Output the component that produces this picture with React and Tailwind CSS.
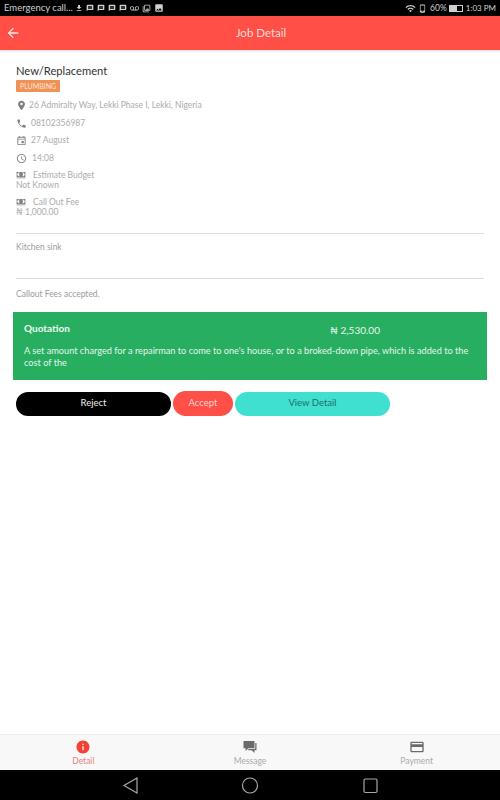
import { IoMdArrowBack, IoMdPin, IoMdCall, IoMdCash, IoMdInformationCircle, IoMdChatboxes } from 'react-icons/io'
import { MdOutlineEvent, MdAccessTime, MdWifi, MdMessage, MdImage, MdFileDownload, MdOutlineCreditCard, MdOutlineVoicemail, MdOutlinePhotoLibrary, MdPhoneAndroid } from 'react-icons/md'

const DetailRow = ({ icon: Icon, children, textLeft, iconSize }) => (
  <div className="flex items-center h-[17.5px] text-[8.5px] text-[#ababab]">
    <span className={`${textLeft} shrink-0`}>
      <Icon className={`${iconSize} text-[#808080]`} />
    </span>
    <span>{children}</span>
  </div>
)

const StatusBar = () => (
  <div className="flex items-center justify-between h-4 bg-black pl-1 pr-1 text-[#cfcfcf] shrink-0">
    <div className="flex items-center">
      <span className="text-[9.5px] w-[71px]">Emergency call...</span>
      <div className="flex items-center gap-[3px]">
        <MdFileDownload className="text-[8px]" />
        <MdMessage className="text-[8px]" />
        <MdMessage className="text-[8px]" />
        <MdMessage className="text-[8px]" />
        <MdMessage className="text-[8px]" />
        <MdOutlineVoicemail className="text-[9px]" />
        <MdOutlinePhotoLibrary className="text-[9px]" />
        <MdImage className="text-[10px]" />
      </div>
    </div>
    <div className="flex items-center text-[8.5px]">
      <MdWifi className="text-[11px]" />
      <MdPhoneAndroid className="text-[9px] ml-[2px]" />
      <span className="ml-[3px]">60%</span>
      <div className="flex w-[14px] h-[7px] border border-[#cfcfcf] ml-[2px]">
        <div className="w-[7px] bg-[#cfcfcf]" />
      </div>
      <span className="ml-[3px] text-[8px]">1:03 PM</span>
    </div>
  </div>
)

const NavItem = ({ icon: Icon, label, active, size }) => (
  <div className="flex flex-col items-center flex-1 pt-[4px]">
    <Icon className={`${size} ${active ? 'text-[#f44336]' : 'text-[#6b6b6b]'}`} />
    <span className={`text-[8.5px] leading-3 ${active ? 'text-[#e88080]' : 'text-[#ababab]'}`}>{label}</span>
  </div>
)

export default function App() {
  return (
    <div className="flex flex-col w-[500px] h-[800px] bg-white font-['Lato','Open_Sans',sans-serif]">
      <StatusBar />

      {/* header */}
      <div className="relative flex items-center justify-center h-[34px] pl-[22px] bg-[#ff4f47] shadow-[0_1px_2px_rgba(0,0,0,0.15)] shrink-0">
        <IoMdArrowBack className="absolute left-[5px] text-[16px] text-[#fde8e6]" />
        <span className="text-[11.5px] text-[#fcdcd9]">Job Detail</span>
      </div>

      <div className="flex-1">
        <div className="px-4 pt-[14px]">
          <h1 className="text-[11.2px] leading-[14px] text-[#333]">New/Replacement</h1>
          <div className="flex items-center w-fit mt-[2px] px-[4px] h-3 bg-[#ee9257] rounded-[1px] text-[7px] text-[#fbe3d2]">PLUMBING</div>

          <div className="mt-[5px]">
            <DetailRow icon={IoMdPin} textLeft="w-[13px]" iconSize="text-[11px]">26 Admiralty Way, Lekki Phase I, Lekki, Nigeria</DetailRow>
            <DetailRow icon={IoMdCall} textLeft="w-[15px]" iconSize="text-[11px]">08102356987</DetailRow>
            <DetailRow icon={MdOutlineEvent} textLeft="w-[15px]" iconSize="text-[11px]">27 August</DetailRow>
            <DetailRow icon={MdAccessTime} textLeft="w-[16px]" iconSize="text-[11px]">14:08</DetailRow>
          </div>

          <div className="mt-[3px] text-[8.5px] text-[#ababab] leading-[10px]">
            <div className="flex items-center gap-[7px]">
              <IoMdCash className="text-[10px] text-[#808080]" />
              <span>Estimate Budget</span>
            </div>
            <div>Not Known</div>
          </div>

          <div className="mt-[7px] text-[8.5px] text-[#ababab] leading-[10px]">
            <div className="flex items-center gap-[7px]">
              <IoMdCash className="text-[10px] text-[#808080]" />
              <span>Call Out Fee</span>
            </div>
            <div>₦ 1,000.00</div>
          </div>

          <div className="mt-[16px] border-t border-[#e0e0e0] pt-[8px] h-[45px] text-[8.5px] leading-[10px] text-[#9c9c9c]">
            Kitchen sink
          </div>
          <div className="border-t border-[#d9d9d9] pt-[10px] h-[34px] text-[8.5px] leading-[10px] text-[#9c9c9c]">
            Callout Fees accepted.
          </div>
        </div>

        {/* quotation */}
        <div className="mx-[13px] h-[68px] bg-[#27ae60] px-[11px] pt-[10px] text-white">
          <div className="flex">
            <span className="w-[306px] text-[10px] leading-3 font-bold text-[#eefaf2]">Quotation</span>
            <span className="text-[10px] leading-[14px] mt-[1px] text-[#e6f7ec]">₦ 2,530.00</span>
          </div>
          <p className="mt-[8px] text-[9.2px] leading-3 text-[#e3f5e9]">
            A set amount charged for a repairman to come to one's house, or to a broked-down pipe, which is added to the cost of the
          </p>
        </div>

        <div className="flex items-center gap-[2px] pl-4 mt-[11px]">
          <button className="w-[155px] h-6 rounded-full bg-black text-[9.5px] text-[#eee]">Reject</button>
          <button className="w-[60px] h-[25px] rounded-full bg-[#ff4f47] text-[9.5px] text-[#fcd5d1]">Accept</button>
          <button className="w-[155px] h-6 rounded-full bg-[#40e0d0] text-[9.5px] text-[#1f6f68]">View Detail</button>
        </div>
      </div>

      {/* bottom tabs */}
      <div className="flex h-[36px] bg-[#f8f8f8] border-t border-[#eee] shrink-0">
        <NavItem icon={IoMdInformationCircle} label="Detail" active size="text-[16px]" />
        <NavItem icon={IoMdChatboxes} label="Message" size="text-[16px]" />
        <NavItem icon={MdOutlineCreditCard} label="Payment" size="text-[16px]" />
      </div>

      {/* android nav */}
      <div className="flex items-center justify-center h-[30px] bg-black shrink-0">
        <svg width="260" height="18" viewBox="0 0 260 18" fill="none" stroke="#a8a8a8" strokeWidth="1.2">
          <path d="M17 2 L4 9.5 L17 17 Z" />
          <circle cx="130" cy="9.5" r="7.5" />
          <rect x="244" y="3" width="13" height="13.5" rx="1.5" />
        </svg>
      </div>
    </div>
  )
}
